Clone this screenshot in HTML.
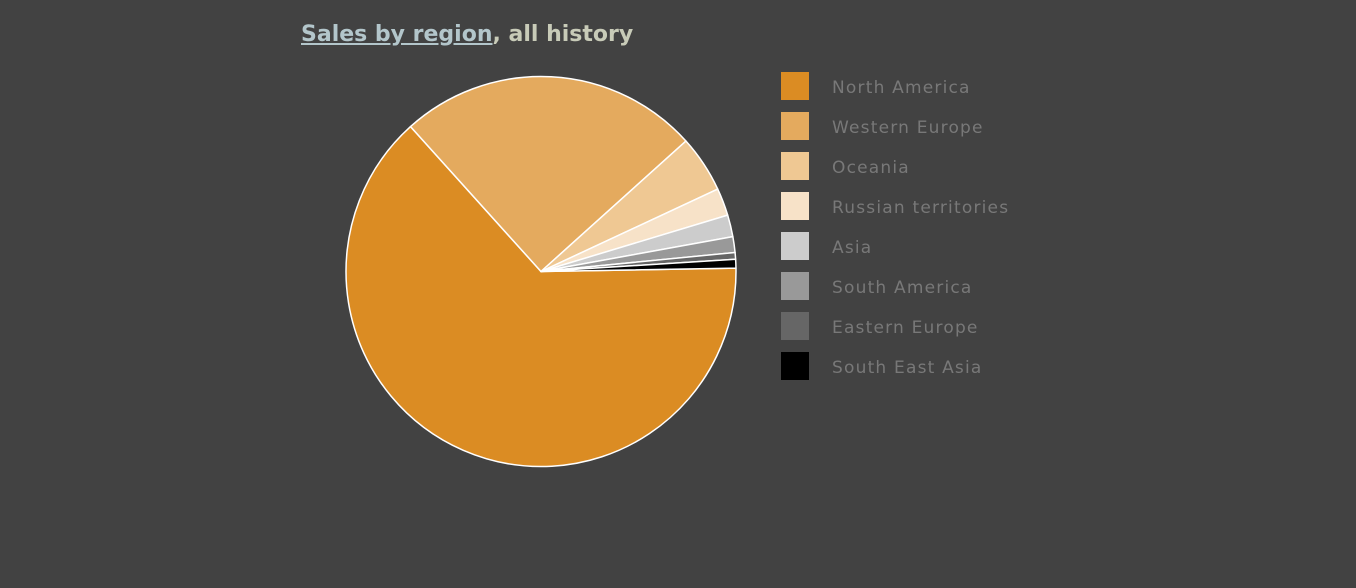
<!DOCTYPE html>
<html><head><meta charset="utf-8"><style>
body{margin:0;width:1356px;height:588px;background:#424242;overflow:hidden;position:relative;font-family:"DejaVu Sans","Liberation Sans",sans-serif}
.t{position:absolute;left:301px;top:22px;font-weight:bold;font-size:22px;color:#c8cbb8;letter-spacing:0px}
.t u{color:#b3c6cb}
.lg{position:absolute;left:781px}
.sw{position:absolute;width:28px;height:28px;left:0}
.lt{position:absolute;left:51px;top:6px;white-space:nowrap;color:#787878;font-size:17px;letter-spacing:1.2px;font-family:"DejaVu Sans",sans-serif}
</style></head><body>
<div class="t"><u>Sales by region</u>, all history</div>
<svg id="p" width="1356" height="588" style="position:absolute;left:0;top:0"></svg>
<div id="L"></div>
<script>
var cx=541,cy=271.5,r=195;
var s=[[-1,228,"#db8c23"],[228,318,"#e4aa5e"],[318,335,"#efc893"],[335,343.2,"#f7e2c8"],[343.2,349.7,"#cccccc"],[349.7,354.4,"#999999"],[354.4,356.4,"#666666"],[356.4,359,"#000000"]];
var h="";
function pt(a){a=a*Math.PI/180;return (cx+r*Math.cos(a)).toFixed(2)+","+(cy+r*Math.sin(a)).toFixed(2);}
s.forEach(function(x){var large=(x[1]-x[0])>180?1:0;h+='<path d="M'+cx+','+cy+' L'+pt(x[0])+' A'+r+','+r+' 0 '+large+' 1 '+pt(x[1])+' Z" fill="'+x[2]+'" stroke="#fff" stroke-width="1.5" stroke-linejoin="round"/>';});
document.getElementById("p").innerHTML=h;
var n=["North America","Western Europe","Oceania","Russian territories","Asia","South America","Eastern Europe","South East Asia"];
var L="";
n.forEach(function(t,i){L+='<div class="lg" style="top:'+(72+40*i)+'px"><div class="sw" style="background:'+s[i][2]+'"></div><div class="lt">'+t+'</div></div>';});
document.getElementById("L").innerHTML=L;
</script>
</body></html>
